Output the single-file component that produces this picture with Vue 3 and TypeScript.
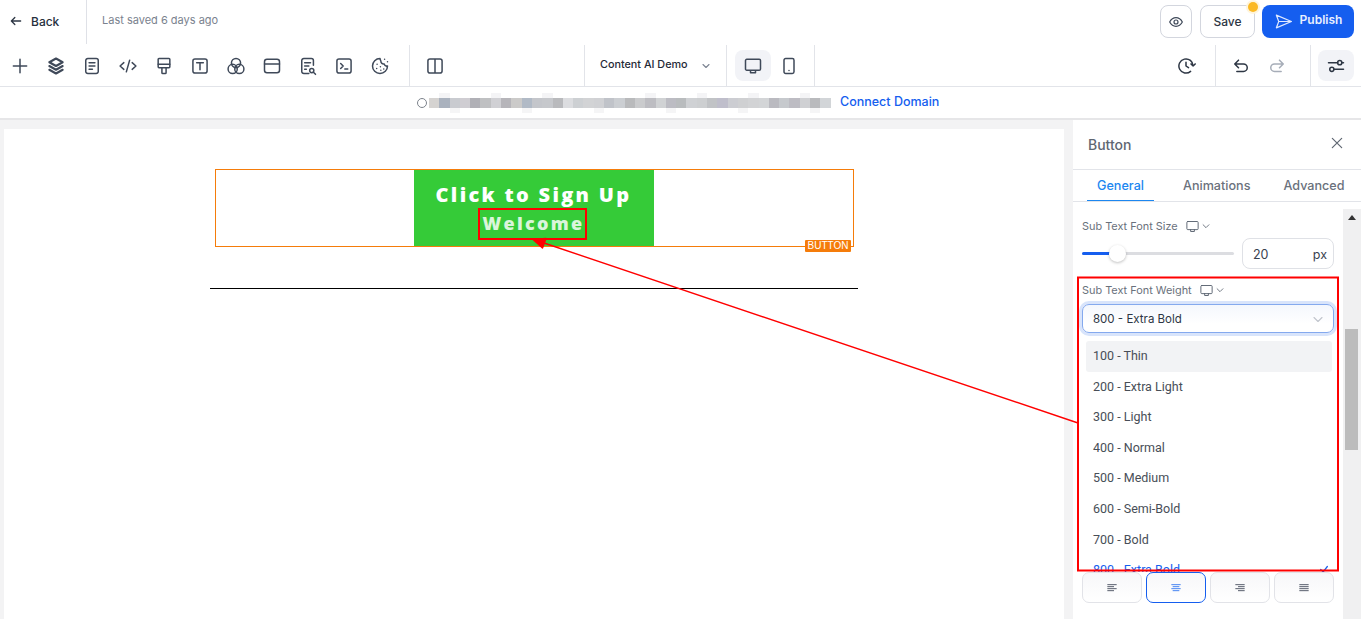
<script setup lang="ts">
const arc = (x: number, y: number, r: number) =>
  `M${x - r} ${y}a${r} ${r} 0 1 0 ${r * 2} 0a${r} ${r} 0 1 0 ${-r * 2} 0`

const toolIcons: string[][] = [
  ['M12 4v16M4 12h16'],
  ['M12 3 4 7.5l8 4.5 8-4.5z', 'M4 12l8 4.5 8-4.5', 'M4 16.5 12 21l8-4.5'],
  ['M7 3h10a2.5 2.5 0 0 1 2.5 2.5v13A2.5 2.5 0 0 1 17 21H7a2.5 2.5 0 0 1-2.5-2.5v-13A2.5 2.5 0 0 1 7 3z', 'M8.5 8h7M8.5 12h7M8.5 16h4'],
  ['M7 8l-4.5 4L7 16', 'M17 8l4.5 4-4.5 4', 'M14 5l-4 14'],
  ['M6 3h12a1 1 0 0 1 1 1v9a1 1 0 0 1-1 1H6a1 1 0 0 1-1-1V4a1 1 0 0 1 1-1z', 'M5 10h14', 'M9.500 14v6a1 1 0 0 0 1 1h3a1 1 0 0 0 1-1v-6'],
  ['M6 3.500h12A2.500 2.500 0 0 1 20.500 6v12a2.500 2.500 0 0 1-2.500 2.500H6A2.500 2.500 0 0 1 3.500 18V6A2.500 2.500 0 0 1 6 3.500z', 'M8 8h8M12 8v8.500'],
  [arc(12, 8.5, 5.500), arc(8, 15.5, 5.500), arc(16, 15.5, 5.500)],
  ['M6 4h12a3 3 0 0 1 3 3v10a3 3 0 0 1-3 3H6a3 3 0 0 1-3-3V7a3 3 0 0 1 3-3z', 'M3 9.500h18'],
  ['M13 21H7a2.500 2.500 0 0 1-2.500-2.500v-13A2.500 2.500 0 0 1 7 3h9a2.500 2.500 0 0 1 2.500 2.500V11', 'M8 8h7M8 12h5M8 16h2', arc(16.5, 17.5, 2.500), 'M18.500 19.500 21 22'],
  ['M6 3.500h12A2.500 2.500 0 0 1 20.500 6v12a2.500 2.500 0 0 1-2.500 2.500H6A2.500 2.500 0 0 1 3.500 18V6A2.500 2.500 0 0 1 6 3.500z', 'M8 9l3 3-3 3', 'M13 15.500h3.500'],
  ['M12 3a9 9 0 1 0 9 9c-2 .5-3.500-.5-4-2.500-2 .5-4-1-4-3.500-.5-1-1-2-1-3z', 'M8.500 10h.01M8 15h.01M12.500 13h.01M13 17h.01M16.500 15.500h.01', 'M17.500 4h.01M21 7h.01'],
]

const blur: string[] = [
  '#d5d3d1', '#aab2be', '#c9cbd0', '#cfcdd2', '#b0b0b6', '#bfc0c2', '#d0d0d4', '#b6b5ba', '#cbcac9', '#b1bac6',
  '#c4c6cb', '#c6c8cc', '#b9babd', '#dcdde0', '#cdd0d3', '#d2d3d5', '#d0d1d4', '#c0c3c9', '#cbced2', '#b9babc',
  '#cacbcd', '#bdbdc2', '#d0d2d4', '#bcbcc3', '#b9bcbe', '#cfd1d4', '#cdcfd1', '#c1c3c6', '#bfbecb', '#cccdd2',
  '#cfd0d2', '#d2d3d5', '#d3d5d7', '#babac0', '#c6c9cd', '#bdbcc3', '#cfd0d3', '#b9babd', '#d2d5d8',
]

const weights = ['100 - Thin', '200 - Extra Light', '300 - Light', '400 - Normal', '500 - Medium', '600 - Semi-Bold', '700 - Bold', '800 - Extra Bold']

const aligns: { lines: string; active?: boolean }[] = [
  { lines: 'M5 7h14M5 10h10M5 13h14M5 16h10' },
  { lines: 'M5 7h14M7 10h10M5 13h14M7 16h10', active: true },
  { lines: 'M5 7h14M9 10h10M5 13h14M9 16h10' },
  { lines: 'M5 7h14M5 10h14M5 13h14M5 16h14' },
]
</script>

<template>
  <div class="page">
    <header class="top-row">
      <div class="back">
        <svg class="icon-s" viewBox="0 0 24 24"><path d="M20 12H4M10 6l-6 6 6 6" /></svg>
        <span>Back</span>
      </div>
      <span class="saved">Last saved 6 days ago</span>
      <div class="top-actions">
        <button class="ghost eye">
          <svg class="icon-e" viewBox="0 0 24 24">
            <path d="M2.500 12S6 5.500 12 5.500 21.500 12 21.500 12 18 18.500 12 18.500 2.500 12 2.500 12z" />
            <circle cx="12" cy="12" r="3" />
          </svg>
        </button>
        <button class="ghost save"><span>Save</span><i class="dot"></i></button>
        <button class="publish">
          <svg class="icon-p" viewBox="0 0 24 24"><path d="M3 4l19 8-19 8 3-8zM6 12h16" /></svg>
          <span>Publish</span>
        </button>
      </div>
    </header>

    <nav class="tool-row">
      <div class="tools">
        <span v-for="(icon, i) in toolIcons" :key="i" class="tool">
          <svg class="icon" :class="{ heavy: i === 1 }" viewBox="0 0 24 24"><path v-for="d in icon" :key="d" :d="d" /></svg>
        </span>
      </div>
      <div class="split">
        <svg class="icon" viewBox="0 0 24 24">
          <path d="M6 3.500h12A2.500 2.500 0 0 1 20.500 6v12a2.500 2.500 0 0 1-2.500 2.500H6A2.500 2.500 0 0 1 3.500 18V6A2.500 2.500 0 0 1 6 3.500zM12 3.500v17" />
        </svg>
      </div>
      <div class="site-pick">
        <span>Content AI Demo</span>
        <svg class="chev" viewBox="0 0 12 12"><path d="M3 4.500l3 3 3-3" /></svg>
      </div>
      <div class="devices">
        <span class="device on">
          <svg class="icon" viewBox="0 0 24 24"><path d="M4.500 4h15A1.500 1.500 0 0 1 21 5.500v10a1.500 1.500 0 0 1-1.500 1.500h-15A1.500 1.500 0 0 1 3 15.500v-10A1.500 1.500 0 0 1 4.500 4zM9 17v3h6v-3" /></svg>
        </span>
        <span class="device">
          <svg class="icon" viewBox="0 0 24 24"><path d="M8 3h8a2 2 0 0 1 2 2v14a2 2 0 0 1-2 2H8a2 2 0 0 1-2-2V5a2 2 0 0 1 2-2zM12 17.500h.01" /></svg>
        </span>
      </div>
      <div class="tool-right">
        <span class="history">
          <svg class="icon dark" viewBox="0 0 24 24"><path d="M20.500 12a8.500 8.500 0 1 0-3 6.500M12 7.500V12l3 2M23 9.500l-2.500 2.500L18 9.500" /></svg>
        </span>
        <span class="undo">
          <svg class="icon dark" viewBox="0 0 24 24"><path d="M9 5 4.500 9.500 9 14M4.500 9.500H15a4.500 4.500 0 0 1 0 9H7" /></svg>
          <svg class="icon faded" viewBox="0 0 24 24"><path d="M15 5l4.500 4.500L15 14M19.500 9.500H9a4.500 4.500 0 0 0 0 9h8" /></svg>
        </span>
        <span class="settings">
          <span class="settings-btn">
            <svg class="icon dark" viewBox="0 0 24 24"><circle cx="16.500" cy="8" r="2.500" /><circle cx="7" cy="16" r="2.500" /><path d="M3 8h11M19 8h2M9.500 16H21" /></svg>
          </span>
        </span>
      </div>
    </nav>

    <div class="domain-row">
      <i class="ring"></i>
      <div class="blur">
        <i v-for="(c, i) in blur" :key="i" :style="{ background: c }"></i>
      </div>
      <a class="connect">Connect Domain</a>
    </div>

    <main class="workspace">
      <section class="canvas">
        <div class="btn-block">
          <div class="cta">
            <span class="cta-main">Click to Sign Up</span>
            <span class="cta-sub">Welcome</span>
          </div>
          <span class="tag">BUTTON</span>
        </div>
        <div class="rule"></div>
      </section>

      <aside class="panel">
        <div class="panel-head">
          <span>Button</span>
          <svg class="close" viewBox="0 0 24 24"><path d="M5 5l14 14M19 5 5 19" /></svg>
        </div>
        <div class="tabs">
          <span class="tab active">General</span>
          <span class="tab anim">Animations</span>
          <span class="tab adv">Advanced</span>
        </div>
        <div class="panel-body">
          <div class="fields">
            <div class="label">
              Sub Text Font Size
              <svg class="mini" viewBox="0 0 24 24"><path d="M4.500 4h15A1.500 1.500 0 0 1 21 5.500v10a1.500 1.500 0 0 1-1.500 1.500h-15A1.500 1.500 0 0 1 3 15.500v-10A1.500 1.500 0 0 1 4.500 4zM9 17v3h6v-3" /></svg>
              <svg class="chev-s" viewBox="0 0 12 12"><path d="M2.500 4.500 6 8l3.500-3.500" /></svg>
            </div>
            <div class="size-row">
              <div class="slider"><i class="fill"></i><i class="knob"></i></div>
              <div class="size-input"><span>20</span><span>px</span></div>
            </div>
            <div class="label weight">
              Sub Text Font Weight
              <svg class="mini" viewBox="0 0 24 24"><path d="M4.500 4h15A1.500 1.500 0 0 1 21 5.500v10a1.500 1.500 0 0 1-1.500 1.500h-15A1.500 1.500 0 0 1 3 15.500v-10A1.500 1.500 0 0 1 4.500 4zM9 17v3h6v-3" /></svg>
              <svg class="chev-s" viewBox="0 0 12 12"><path d="M2.500 4.500 6 8l3.500-3.500" /></svg>
            </div>
            <div class="select-wrap">
              <div class="select">
                <span>800 - Extra Bold</span>
                <svg class="chev faint" viewBox="0 0 12 12"><path d="M2 4.500 6 8.500l4-4" /></svg>
              </div>
              <ul class="menu">
                <li v-for="(w, i) in weights" :key="w" :class="{ hover: i === 0, picked: i === 7 }">
                  {{ w }}
                  <svg v-if="i === 7" class="tick" viewBox="0 0 12 12"><path d="M2 6.500 5 9.500 10 3" /></svg>
                </li>
              </ul>
            </div>
            <div class="aligns">
              <span v-for="(a, i) in aligns" :key="i" class="align" :class="{ active: a.active }">
                <svg viewBox="0 0 24 24"><path :d="a.lines" /></svg>
              </span>
            </div>
          </div>
          <div class="scrollbar">
            <i class="up"></i>
            <i class="thumb"></i>
          </div>
        </div>
      </aside>
    </main>

    <svg class="notes" viewBox="0 0 1361 619">
      <rect x="479" y="209" width="107" height="30" />
      <rect x="1078" y="277.500" width="260" height="293" />
      <path d="M1078 423 544 243" />
      <path class="head" d="M533 239.500l13-1-3.500 9.500z" />
    </svg>
  </div>
</template>

<style>
html,
body {
  margin: 0;
  overflow: hidden;
  background: #fff;
}
</style>

<style scoped>
.page {
  position: relative;
  width: 1361px;
  height: 619px;
  display: flex;
  flex-direction: column;
  overflow: hidden;
  font-family: Inter, "Noto Sans", sans-serif;
  color: #2d3644;
}

svg {
  display: block;
  fill: none;
  stroke: #3f4959;
  stroke-width: 1.800;
  stroke-linecap: round;
  stroke-linejoin: round;
}

.icon {
  width: 20px;
  height: 20px;
}

.icon.heavy {
  stroke-width: 2.500;
}

.icon.dark {
  stroke: #2d3644;
}

.icon.faded {
  stroke: #a6adb8;
}

.icon-s {
  width: 14px;
  height: 14px;
  stroke: #2d3644;
  stroke-width: 2.200;
}

.icon-e {
  width: 16px;
  height: 16px;
}

/* first row */
.top-row {
  height: 44px;
  display: flex;
  align-items: center;
}

.back {
  width: 87px;
  height: 100%;
  box-sizing: border-box;
  padding: 0 0 2px 9px;
  display: flex;
  align-items: center;
  gap: 8px;
  font-size: 12px;
  font-weight: 500;
  color: #27303d;
  border-right: 1px solid #dfe1e7;
  flex: none;
}

.saved {
  margin: -4px 0 0 15px;
  font-size: 11px;
  color: #7a828e;
}

.top-actions {
  margin: -1px 7px 0 auto;
  display: flex;
  gap: 8px;
}

.top-actions button {
  height: 33px;
  box-sizing: border-box;
  border-radius: 8px;
  font-family: inherit;
  font-size: 12px;
  font-weight: 500;
  padding: 0;
}

.ghost {
  background: #fff;
  border: 1px solid #d3d6de;
  color: #2d3644;
}

.eye {
  width: 32px;
  display: flex;
  align-items: center;
  justify-content: center;
}

.save {
  position: relative;
  width: 55px;
}

.dot {
  position: absolute;
  top: -4px;
  right: -4px;
  width: 10px;
  height: 10px;
  border-radius: 50%;
  background: #fbb923;
  box-shadow: 0 0 0 2px #fff5dc;
}

.publish {
  width: 92px;
  margin-left: -1px;
  display: flex;
  align-items: center;
  justify-content: center;
  gap: 7px;
  background: #155eef;
  color: #e8f0ff;
  border: none;
  font-weight: 600 !important;
}

.publish span {
  margin-top: -4px;
}

.icon-p {
  width: 19px;
  height: 19px;
  stroke: #dfe9ff;
  stroke-width: 1.500;
}

/* second row */
.tool-row {
  height: 43px;
  box-sizing: border-box;
  padding-top: 1px;
  display: flex;
  align-items: stretch;
  border-bottom: 1px solid #e2e4e9;
}

.tools {
  width: 410px;
  box-sizing: border-box;
  padding-left: 2px;
  display: flex;
  align-items: center;
  border-right: 1px solid #e2e4e9;
}

.tool {
  width: 36px;
  display: flex;
  justify-content: center;
}

.split {
  width: 175px;
  box-sizing: border-box;
  padding-left: 15px;
  display: flex;
  align-items: center;
  border-right: 1px solid #e2e4e9;
}

.site-pick {
  width: 142px;
  box-sizing: border-box;
  padding: 0 14px 0 15px;
  display: flex;
  align-items: center;
  justify-content: space-between;
  font-size: 10.800px;
  font-weight: 500;
  color: #1f2937;
  border-right: 1px solid #e2e4e9;
}

.site-pick span {
  margin-top: -3px;
}

.chev {
  width: 12px;
  height: 12px;
  stroke: #7c8492;
  stroke-width: 1.100;
}

.chev.faint {
  stroke: #c0c4cc;
}

.devices {
  width: 88px;
  box-sizing: border-box;
  padding-left: 8px;
  display: flex;
  align-items: center;
  border-right: 1px solid #e2e4e9;
}

.device {
  width: 36px;
  height: 31px;
  border-radius: 8px;
  display: flex;
  align-items: center;
  justify-content: center;
}

.device.on {
  background: #f2f3f7;
}

.tool-right {
  margin-left: auto;
  display: flex;
}

.history {
  width: 59px;
  box-sizing: border-box;
  padding-left: 19px;
  display: flex;
  align-items: center;
  border-right: 1px solid #e2e4e9;
}

.undo {
  width: 95px;
  box-sizing: border-box;
  padding-left: 15px;
  display: flex;
  align-items: center;
  gap: 16px;
  border-right: 1px solid #e2e4e9;
}

.settings {
  width: 50px;
  box-sizing: border-box;
  padding-left: 7px;
  display: flex;
  align-items: center;
}

.settings-btn {
  width: 36px;
  height: 31px;
  border-radius: 8px;
  background: #f2f3f7;
  display: flex;
  align-items: center;
  justify-content: center;
}

/* domain row */
.domain-row {
  height: 33px;
  box-sizing: border-box;
  padding-left: 417px;
  display: flex;
  align-items: center;
  border-bottom: 2px solid #e6e6e8;
}

.ring {
  width: 8px;
  height: 8px;
  border: 1px solid #7d838c;
  border-radius: 50%;
  flex: none;
}

.blur {
  display: flex;
  margin-left: 2px;
  height: 10px;
  width: 402px;
}

.blur i {
  width: 10.300px;
  height: 100%;
  flex: none;
}

.blur i:nth-child(5n + 2) {
  box-shadow: 0 -5px 0 #f4f4f6;
}

.blur i:nth-child(7n + 3) {
  box-shadow: 0 5px 0 #f5f5f6;
}

.connect {
  margin: -2px 0 0 9px;
  font-size: 12.500px;
  font-weight: 500;
  color: #155eef;
}

/* canvas */
.workspace {
  flex: 1;
  min-height: 0;
  display: flex;
  background: #f3f3f4;
}

.canvas {
  width: 1060px;
  margin: 9px 9px 0 4px;
  box-sizing: border-box;
  padding-top: 40px;
  background: #fff;
  flex: none;
}

.btn-block {
  position: relative;
  width: 639px;
  height: 78px;
  box-sizing: border-box;
  margin-left: 211px;
  border: 1px solid #f57c0a;
  display: flex;
  justify-content: center;
}

.cta {
  width: 240px;
  height: 76px;
  margin-left: -2px;
  background: #35cb38;
  display: flex;
  flex-direction: column;
  align-items: center;
  color: #fff;
  font-family: "Open Sans", sans-serif;
  font-weight: 800;
}

.cta-main {
  margin-top: 13px;
  font-size: 20px;
  line-height: 24px;
  letter-spacing: 2.300px;
}

.cta-sub {
  margin-top: 4px;
  font-size: 18px;
  line-height: 24px;
  letter-spacing: 2.300px;
  opacity: 0.82;
}

.tag {
  position: absolute;
  right: 2px;
  bottom: -6px;
  height: 12px;
  padding: 0 2px;
  width: 42px;
  text-align: center;
  background: #f57c0a;
  border-radius: 1px;
  color: #fff;
  font: 10px/12px "Liberation Sans", sans-serif;
}

.rule {
  width: 648px;
  height: 1px;
  margin: 41px 0 0 206px;
  background: #000;
}

/* right panel */
.panel {
  flex: 1;
  min-width: 0;
  display: flex;
  flex-direction: column;
  background: #fff;
}

.panel-head {
  height: 50px;
  box-sizing: border-box;
  padding: 0 16px 0 15px;
  display: flex;
  align-items: center;
  justify-content: space-between;
  font-size: 14px;
  font-weight: 500;
  color: #5f6772;
  border-bottom: 1px solid #e2e4e9;
}

.close {
  width: 16px;
  height: 16px;
  margin-top: -4px;
  stroke: #5f6772;
}

.tabs {
  height: 31px;
  display: flex;
  font-size: 12.600px;
  font-weight: 500;
  color: #6a717c;
  border-bottom: 1px solid #e2e4e9;
}

.tab {
  box-sizing: border-box;
  height: 31px;
  padding-top: 8px;
  line-height: 16px;
  text-align: center;
}

.tab.active {
  width: 67px;
  margin-left: 14px;
  color: #1d87f0;
  border-bottom: 1px solid #1d87f0;
}

.tab.anim {
  margin-left: 29px;
}

.tab.adv {
  margin-left: 33px;
}

.panel-body {
  flex: 1;
  min-height: 0;
  display: flex;
  padding-top: 7px;
}

.fields {
  flex: 1;
  min-width: 0;
  padding: 9px 9px 0;
}

.label {
  display: flex;
  align-items: center;
  height: 16px;
  font-size: 10.900px;
  color: #6a717c;
}

.label.weight {
  margin-top: 13px;
}

.mini {
  width: 15px;
  height: 15px;
  margin-left: 7px;
  stroke: #59626f;
  stroke-width: 1.500;
}

.chev-s {
  width: 10px;
  height: 10px;
  margin-left: 1px;
  stroke: #59626f;
  stroke-width: 1;
}

.size-row {
  margin-top: 4px;
  display: flex;
  align-items: center;
  gap: 8px;
}

.slider {
  position: relative;
  width: 152px;
  height: 3px;
  background: #dcdde1;
  border-radius: 2px;
}

.fill {
  position: absolute;
  left: 0;
  top: 0;
  height: 3px;
  width: 30px;
  background: #155eef;
  border-radius: 2px;
}

.knob {
  position: absolute;
  left: 27px;
  top: -7px;
  width: 17px;
  height: 17px;
  border-radius: 50%;
  background: #fff;
  box-shadow: 0 1px 3px rgba(0, 0, 0, 0.25);
}

.size-input {
  width: 92px;
  height: 31px;
  box-sizing: border-box;
  padding: 1px 6px 0 10px;
  display: flex;
  align-items: center;
  justify-content: space-between;
  border: 1px solid #dfe1e6;
  border-radius: 8px;
  font-size: 12.500px;
  color: #39424f;
}

.select-wrap {
  position: relative;
  margin-top: 6px;
}

.select {
  height: 29px;
  box-sizing: border-box;
  padding: 0 9px 0 10px;
  display: flex;
  align-items: center;
  justify-content: space-between;
  border: 1px solid #84a9ee;
  border-radius: 7px;
  box-shadow: 0 0 0 3px #d8e4fb;
  font-size: 11.500px;
  color: #2d3644;
  background: linear-gradient(#f4f7fd, #fff 70%);
}

.menu {
  position: absolute;
  left: 0;
  right: 0;
  top: 37px;
  height: 231px;
  margin: 0;
  padding: 0 2px 0 4px;
  box-sizing: border-box;
  list-style: none;
  overflow: hidden;
  background: #fff;
  z-index: 2;
  font-family: Roboto, sans-serif;
  font-size: 12.500px;
  color: #484e57;
}

.menu li {
  position: relative;
  height: 30.600px;
  box-sizing: border-box;
  padding-left: 7px;
  line-height: 29px;
  border-radius: 3px;
}

.menu li.hover {
  background: #f2f3f5;
}

.menu li.picked {
  color: #155eef;
}

.tick {
  position: absolute;
  right: 3px;
  top: 9px;
  width: 10px;
  height: 10px;
  stroke: #155eef;
  stroke-width: 1.500;
}

.aligns {
  margin-top: 239px;
  display: flex;
  gap: 4px;
}

.align {
  width: 60px;
  height: 31px;
  box-sizing: border-box;
  display: flex;
  align-items: center;
  justify-content: center;
  border: 1px solid #e2e3e8;
  border-radius: 7px;
  background: linear-gradient(#f7f7f9, #fff);
}

.align svg {
  width: 16px;
  height: 16px;
  stroke: #4b5362;
  stroke-width: 1.400;
  stroke-linecap: butt;
}

.align.active {
  border-color: #155eef;
}

.align.active svg {
  stroke: #3b7cf0;
}

.scrollbar {
  position: relative;
  width: 18px;
  flex: none;
  background: #f0f0f1;
}

.up {
  position: absolute;
  left: 5px;
  top: 6px;
  width: 0;
  height: 0;
  border: 4px solid transparent;
  border-top: 0;
  border-bottom: 5px solid #333;
}

.thumb {
  position: absolute;
  left: 2px;
  top: 120px;
  width: 13px;
  height: 121px;
  background: #bcbcbc;
}

/* red review marks drawn over the screen */
.notes {
  position: absolute;
  inset: 0;
  width: 1361px;
  height: 619px;
  z-index: 5;
  pointer-events: none;
}

.notes rect {
  stroke: #f00;
  stroke-width: 2;
  stroke-linejoin: miter;
}

.notes path {
  stroke: #f00;
  stroke-width: 1.400;
}

.notes .head {
  fill: #f00;
}
</style>
